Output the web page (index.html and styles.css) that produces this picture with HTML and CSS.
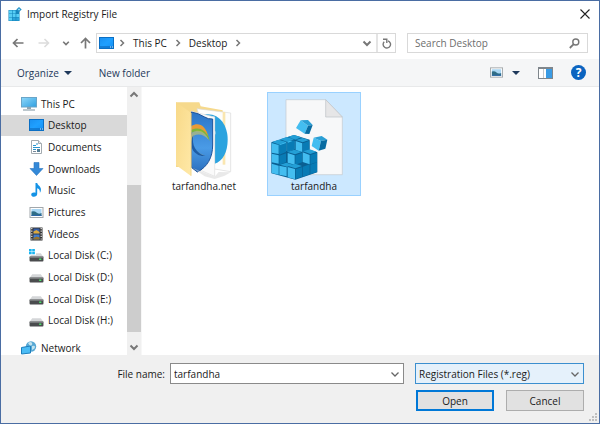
FILE: index.html
```html
<!DOCTYPE html>
<html lang="en">
<head>
  <meta charset="UTF-8" />
  <title>Import Registry File</title>
  <link rel="stylesheet" href="styles.css">
</head>
<body>
  <!-- Shared icons -->
  <svg class="sprite" aria-hidden="true">
    <defs>
      <linearGradient id="screenFill" x1="0" y1="0" x2="1" y2="1">
        <stop offset="0" stop-color="#1a8ff0" />
        <stop offset="0.5" stop-color="#1fa0ff" />
        <stop offset="1" stop-color="#1590f5" />
      </linearGradient>
      <linearGradient id="pcFill" x1="0" y1="0" x2="1" y2="1">
        <stop offset="0" stop-color="#8fd8fa" />
        <stop offset="1" stop-color="#2f9fe0" />
      </linearGradient>
      <linearGradient id="shieldFill" x1="0" y1="0" x2="0" y2="1">
        <stop offset="0" stop-color="#2b74c6" />
        <stop offset="0.6" stop-color="#4a9be6" />
        <stop offset="1" stop-color="#2a6fbe" />
      </linearGradient>
      <linearGradient id="flapFill" x1="0" y1="0" x2="1" y2="1">
        <stop offset="0" stop-color="#f8d988" />
        <stop offset="1" stop-color="#ffe9a8" />
      </linearGradient>
      <symbol id="desktopIcon" viewBox="0 0 15 12">
        <rect x="0.5" y="0.5" width="14" height="11" fill="url(#screenFill)" stroke="#0b6fc4" />
        <path d="M1 10h13" stroke="#0a5fae" />
        <path d="M11 10h1M13 10h1" stroke="#d8efff" />
      </symbol>
      <symbol id="chevronDown" viewBox="0 0 10 10">
        <path d="M1.5 3.5L5 7l3.5-3.5" fill="none" stroke="currentColor" stroke-width="1.3" />
      </symbol>
      <symbol id="chevronBold" viewBox="0 0 10 10">
        <path d="M1.500 3.500L5 7l3.500-3.500" fill="none" stroke="currentColor" stroke-width="2" />
      </symbol>
      <symbol id="chevronRight" viewBox="0 0 6 8">
        <path d="M1.500 1L4.500 4l-3 3" fill="none" stroke="currentColor" stroke-width="1.500" />
      </symbol>
      <symbol id="drive" viewBox="0 0 14 12">
        <path d="M3 4h8l2.500 3.500h-13z" fill="#d4d6d8" />
        <rect x="0.5" y="7" width="13" height="4.500" rx="0.8" fill="#4a4c4e" />
        <rect x="0.5" y="7" width="13" height="1" fill="#8d9092" />
        <rect x="9.5" y="8.8" width="2" height="1.400" fill="#4be36a" />
      </symbol>
      <symbol id="picture" viewBox="0 0 14 11">
        <rect x="0.5" y="0.5" width="13" height="10" fill="#fff" stroke="#a2a7ab" />
        <rect x="2" y="2" width="10" height="7" fill="#a9d6f3" />
        <path d="M2 4.500q3-1 5 1t5 .5v3H2z" fill="#2f6d86" />
        <path d="M2 8h10v1H2z" fill="#2d66a8" />
      </symbol>
    </defs>
  </svg>

  <div class="dialog">
    <header class="titleBar">
      <svg class="appIcon" viewBox="0 0 14 15">
        <rect x="0.5" y="3" width="11" height="11" fill="#1686bd" />
        <path d="M1 3.500h3v3H1zM1 7h3v3H1zM1 10.500h3v3H1zM4.600 3.500h3v3h-3zM4.600 7h3v3h-3zM8.300 7h3v3h-3z" fill="#56cdf5" />
        <path d="M4.600 10.500h3v3h-3zM8.300 10.500h3v3h-3z" fill="#2ba3da" />
        <path d="M11 0l2.700 2.500L11 5 8.300 2.500z" fill="#2391c8" />
        <path d="M11 1.400l1.200 1.100L11 3.600 9.800 2.500z" fill="#a6e5fb" />
      </svg>
      <h1 class="title">Import Registry File</h1>
      <button class="iconButton closeButton" aria-label="Close">
        <svg width="10" height="10" viewBox="0 0 10 10"><path d="M0.5 0.5l9 9M9.500 0.5l-9 9" stroke="#222" stroke-width="1.100" /></svg>
      </button>
    </header>

    <!-- Navigation and address -->
    <div class="addressRow">
      <div class="history">
        <button class="iconButton" aria-label="Back"><svg width="12" height="10" viewBox="0 0 12 10"><path d="M11.500 5H1.500M5.500 1l-4 4 4 4" fill="none" stroke="#777" stroke-width="1.700" /></svg></button>
        <button class="iconButton" aria-label="Forward" disabled><svg width="12" height="10" viewBox="0 0 12 10"><path d="M0.5 5h10M6.500 1l4 4-4 4" fill="none" stroke="#dcdcdc" stroke-width="1.600" /></svg></button>
        <button class="iconButton recent" aria-label="Recent locations"><svg width="8" height="8"><use href="#chevronBold" /></svg></button>
        <button class="iconButton" aria-label="Up"><svg width="11" height="12" viewBox="0 0 11 12"><path d="M5.500 11.500v-10M1 6l4.500-4.500L10 6" fill="none" stroke="#777" stroke-width="1.700" /></svg></button>
      </div>
      <div class="addressBox">
        <svg class="addressIcon" width="15" height="12"><use href="#desktopIcon" /></svg>
        <svg class="crumbArrow"><use href="#chevronRight" /></svg>
        <a class="crumb" href="#">This PC</a>
        <svg class="crumbArrow"><use href="#chevronRight" /></svg>
        <a class="crumb" href="#">Desktop</a>
        <svg class="crumbArrow"><use href="#chevronRight" /></svg>
        <button class="iconButton addressDrop" aria-label="Previous locations"><svg width="10" height="10"><use href="#chevronBold" /></svg></button>
        <button class="iconButton refresh" aria-label="Refresh">
          <svg width="10" height="11" viewBox="0 0 10 11"><path d="M6 2.800A3.700 3.700 0 1 1 2.200 3.700" fill="none" stroke="#777" stroke-width="1.400" /><path d="M1 1.300h3.800v3.800" fill="none" stroke="#777" stroke-width="1.400" /></svg>
        </button>
      </div>
      <div class="searchBox">
        <input type="text" class="searchInput" placeholder="Search Desktop" aria-label="Search Desktop" />
        <svg width="11" height="11" viewBox="0 0 11 11"><circle cx="6.800" cy="4" r="3" fill="none" stroke="#777" stroke-width="1.400" /><path d="M4.700 6.200L0.8 10" stroke="#777" stroke-width="1.800" /></svg>
      </div>
    </div>

    <div class="toolbar">
      <button class="toolButton">Organize <span class="triangle"></span></button>
      <button class="toolButton">New folder</button>
      <div class="viewTools">
        <button class="iconButton viewButton" aria-label="Change your view">
          <svg width="13" height="11"><use href="#picture" /></svg>
          <span class="triangle"></span>
        </button>
        <button class="iconButton" aria-label="Show the preview pane">
          <svg width="15" height="12" viewBox="0 0 15 12"><rect x="0.5" y="0.5" width="14" height="11" fill="#fff" stroke="#7f868c" /><path d="M0 1h15" stroke="#7f868c" stroke-width="2" /><path d="M5.500 2v9" stroke="#c5c9cc" /><rect x="8" y="2" width="6" height="9" fill="#3a9be4" /></svg>
        </button>
        <button class="iconButton helpButton" aria-label="Get help">?</button>
      </div>
    </div>

    <main class="content">
      <nav class="sidebar">
        <div class="places">
          <a class="place root" href="#">
            <svg width="16" height="14" viewBox="0 0 16 14"><rect x="0.5" y="0.5" width="15" height="9.500" fill="url(#pcFill)" stroke="#6aa5c8" /><path d="M6 10h4v2H6z" fill="#8ca4b2" /><path d="M2 13h12" stroke="#9aaab4" stroke-width="1.300" /></svg>
            This PC
          </a>
          <a class="place selected" href="#"><svg width="15" height="12"><use href="#desktopIcon" /></svg>Desktop</a>
          <a class="place" href="#">
            <svg width="15" height="14" viewBox="0 0 15 14"><path d="M2.500 0.5h7l3 3v10h-10z" fill="#fff" stroke="#a3abb0" /><path d="M9.500 0.5v3h3" fill="#e4e8ea" stroke="#a3abb0" /><path d="M4 5.500h3M7 4h2M4 7.500h7M4 9.500h3" stroke="#2795cf" stroke-width="1.200" /><path d="M4 11.500h3" stroke="#789" /><rect x="8" y="9" width="3" height="3" fill="#547e96" /></svg>
            Documents
          </a>
          <a class="place" href="#">
            <svg width="15" height="14" viewBox="0 0 15 14"><path d="M5 0.5h5v6h4L7.500 13.500 1 6.500h4z" fill="#3489d8" stroke="#2a76c0" stroke-width="0.6" /></svg>
            Downloads
          </a>
          <a class="place" href="#">
            <svg width="15" height="14" viewBox="0 0 15 14"><path d="M6.500 0h1.700c.3 2.500 4.600 3.300 3.600 7.800-.1.900-.5 1.500-1 2 .4-2.700-.6-3.800-2.600-4.500V11c0 3.500-6 3.500-6 .7 0-2 2.300-2.700 4.300-1.900z" fill="#1593e6" /></svg>
            Music
          </a>
          <a class="place" href="#"><svg width="15" height="11"><use href="#picture" /></svg>Pictures</a>
          <a class="place" href="#">
            <svg width="15" height="14" viewBox="0 0 15 14"><rect x="1.500" y="0.5" width="12" height="13" fill="#343434" /><path d="M2.800 1v12M12.200 1v12" stroke="#eee" stroke-width="1.200" stroke-dasharray="1.200 1.400" /><rect x="4.500" y="1.500" width="6" height="5" fill="#345ea8" /><path d="M4.500 4.500l3-1.500 3 2v1.500h-6z" fill="#dca93d" /><rect x="4.500" y="7.500" width="6" height="5" fill="#3d7bd0" /><path d="M4.500 11l3-1.500 3 1v2h-6z" fill="#96732c" /></svg>
            Videos
          </a>
          <a class="place" href="#">
            <svg width="15" height="13" viewBox="0 0 14 12"><use href="#drive" width="14" height="12" /><path d="M-0.500 0h7v5.500h-7z" fill="#fff" /><path d="M0 0h2.500v2.200H0zM3 0h2.500v2.200H3zM0 2.700h2.500v2.200H0zM3 2.700h2.500v2.200H3z" fill="#19b4f0" /></svg>
            Local Disk (C:)
          </a>
          <a class="place" href="#"><svg width="15" height="13"><use href="#drive" /></svg>Local Disk (D:)</a>
          <a class="place" href="#"><svg width="15" height="13"><use href="#drive" /></svg>Local Disk (E:)</a>
          <a class="place" href="#"><svg width="15" height="13"><use href="#drive" /></svg>Local Disk (H:)</a>
          <a class="place root network" href="#">
            <svg width="16" height="14" viewBox="0 0 16 14"><circle cx="10" cy="5.500" r="5.200" fill="#58a8d4" /><path d="M7 2q3-2 4 0t-2 3zM11 5q3-1 3 1t-3 3z" fill="#c2e3ef" /><path d="M0.5 6.500l9-1.500v7l-9 1z" fill="#4bbcf5" stroke="#1d7fbd" /></svg>
            Network
          </a>
        </div>
        <div class="scrollbar">
          <button class="iconButton scrollArrow up" aria-label="Scroll up"><svg width="10" height="10"><use href="#chevronBold" /></svg></button>
          <div class="track"><div class="thumb"></div></div>
          <button class="iconButton scrollArrow" aria-label="Scroll down"><svg width="10" height="10"><use href="#chevronBold" /></svg></button>
        </div>
      </nav>

      <div class="files">
        <div class="file">
          <svg class="fileIcon" viewBox="-24 -12 240 252">
            <path d="M12 13h70l4 12 66 12v170H12z" fill="#f6d98c" />
            <path d="M75 32l101 13v176l-48-8z" fill="#fdfdfd" stroke="#d9d9d9" stroke-width="2" />
            <path d="M152 42h8v158h-8z" fill="#fae6b0" />
            <path d="M96 50C140 42 167 80 167 125c0 36-14 64-39 72H96z" fill="#2ba3df" />
            <path d="M128 56v160l-8-10V56z" fill="#fff" />
            <path d="M118 104q14-12 12 2l-4 22z" fill="#fff" />
            <path d="M58 40l70 17v178l-70-30z" fill="#fafafa" stroke="#dcdcdc" stroke-width="2" />
            <path d="M58 42q20 3 40 15 10 7 24 6v78c0 38-16 66-46 81l-18-14z" fill="url(#shieldFill)" stroke="#1c5299" stroke-width="3" />
            <path d="M58 88c26-16 47 0 55 41-12-24-28-37-55-25z" fill="#7cb53c" />
            <path d="M58 84c24-14 44 2 50 30-12-19-26-28-50-18z" fill="#e99b35" />
            <path d="M60 104c20-12 38-6 50 21-14-15-30-20-45-12-8 26 3 50 34 60-34 3-50-34-39-69z" fill="#f3d64a" opacity="0.5" />
            <path d="M64 112c-6 30 8 54 36 62-34 4-54-32-36-62z" fill="#1c5ca8" />
            <path d="M62 210l66 26 12-14 36 1-18 10-30 10-30-8z" fill="#d4d4d4" opacity="0.5" />
            <path d="M12 13l46 32v190l-46-34z" fill="url(#flapFill)" />
            <path d="M57 45v188" stroke="#edcf80" stroke-width="2" />
          </svg>
          <span class="fileName">tarfandha.net</span>
        </div>
        <div class="file selected">
          <svg class="fileIcon" viewBox="18 -63 240 252">
            <path d="M54-46h119l50 52v173H54z" fill="#f7f8f9" stroke="#c3c9ce" stroke-width="2" />
            <path d="M173-46V6h50z" fill="#e6e6e7" stroke="#bdc1c5" stroke-width="2" />
            <path d="M10 82l68-22 47 14v30l23 8v60l-66 22-72-19z" fill="#0a5f92" />
            <!-- light faces -->
            <path d="M11 84l21 6v27l-21-4zM11 116l21 5v25l-21-4zM11 146l21 6v27l-21-5zM35 78l20 4v26l-20 6zM59 76l20 2v24l-20 8zM83 78l20 7v26l-20-6zM59 114l21 7v28l-21-6zM104 112l21 8v28l-21-7zM34 152l22 5v27l-22-5zM59 156l22 6v31l-22-6z" fill="#43bdf0" />
            <!-- shaded faces -->
            <path d="M34 91l20-7v27l-20 8zM34 122l20-7v27l-20 7zM58 84l21-8v27l-21 8zM104 85l20-8v26l-20 7zM82 121l20-7v28l-20 7zM127 120l20-7v28l-20 7zM83 163l20-7v29l-20 7zM105 155l20-7v30l-20 7zM127 149l20-7v29l-20 7z" fill="#087bb5" />
            <!-- top faces -->
            <path d="M12 81l21-7 21 7-20 8zM36 73l20-7 22 7-20 8zM60 65l18-5 22 7-18 7zM84 75l19-6 20 6-19 7zM59 111l20-7 22 7-20 7zM105 109l20-6 21 7-19 7zM36 149l19-6 20 6-18 6zM60 153l21-7 21 7-20 7z" fill="#239fd6" />
            <path d="M98 16l22 16-10 24-26-17z" fill="#43bdf0" />
            <path d="M98 16l22-1 14 15-14 2z" fill="#2a9fd5" />
            <path d="M120 32l14-2-10 27-14-1z" fill="#086ca2" />
            <path d="M137 68l22 10-7 29-21-14z" fill="#43bdf0" />
            <path d="M137 68l24-5 17 11-19 4z" fill="#2a9fd5" />
            <path d="M159 78l19-4-6 27-20 6z" fill="#086ca2" />
          </svg>
          <span class="fileName">tarfandha</span>
        </div>
      </div>
    </main>

    <footer class="footer">
      <div class="nameRow">
        <label class="nameLabel" for="fileName">File name:</label>
        <div class="combo nameCombo">
          <input type="text" id="fileName" value="tarfandha" />
          <svg class="comboArrow"><use href="#chevronDown" /></svg>
        </div>
        <div class="combo typeCombo">
          <select id="fileType" aria-label="File type">
            <option>Registration Files (*.reg)</option>
          </select>
          <svg class="comboArrow"><use href="#chevronDown" /></svg>
        </div>
      </div>
      <div class="actions">
        <button class="dialogButton primary">Open</button>
        <button class="dialogButton">Cancel</button>
      </div>
      <svg class="grip" viewBox="0 0 8 8"><path d="M6 0h2v2H6zM3 3h2v2H3zM6 3h2v2H6zM0 6h2v2H0zM3 6h2v2H3zM6 6h2v2H6z" fill="#bfbfbf" /></svg>
    </footer>
  </div>
</body>
</html>
```
FILE: styles.css
```css
* {
  box-sizing: border-box;
}

body {
  margin: 0;
  font-family: "Open Sans", "Noto Sans", sans-serif;
  font-size: 10px;
  line-height: 16px;
  color: #1a1a1a;
}

h1 {
  margin: 0;
  font-size: 10px;
  font-weight: normal;
}

a {
  color: inherit;
  text-decoration: none;
}

button,
input,
select {
  font: inherit;
  color: inherit;
}

svg {
  flex: none;
  display: block;
}

.sprite {
  position: absolute;
  width: 0;
  height: 0;
}

.dialog {
  display: flex;
  flex-direction: column;
  min-height: 100vh;
  border: 1px solid #4a6da3;
  background-color: #fff;
}

.iconButton {
  display: flex;
  align-items: center;
  justify-content: center;
  padding: 0;
  border: none;
  background: none;
  color: #777;
}

/* Title bar */
.titleBar {
  display: flex;
  align-items: center;
  height: 26px;
  padding: 0 9px 0 7px;
}

.appIcon {
  width: 14px;
  height: 15px;
}

.title {
  flex: 1;
  margin-left: 5px;
}

/* Address row */
.addressRow {
  display: flex;
  align-items: center;
  height: 32px;
  padding: 0 11px;
}

.history {
  display: flex;
  align-items: center;
  gap: 14px;
  width: 84px;
}

.recent {
  margin: 0 -4px 0 -2px;
}

.addressBox {
  display: flex;
  align-items: center;
  flex: 1;
  height: 20px;
  border: 1px solid #d9d9d9;
}

.addressIcon {
  margin: 0 5px 0 2px;
}

.crumbArrow {
  width: 6px;
  height: 8px;
  color: #777;
}

.crumb {
  margin: 0 8px;
}

.addressDrop {
  width: 18px;
  margin-left: auto;
}

.refresh {
  width: 19px;
  height: 18px;
  border-left: 2px solid #e4e4e4;
}

.searchBox {
  display: flex;
  align-items: center;
  width: 181px;
  height: 20px;
  margin-left: 11px;
  padding: 0 7px;
  border: 1px solid #d9d9d9;
}

.searchInput {
  flex: 1;
  min-width: 0;
  padding: 0;
  border: none;
  outline: none;
}

.searchInput::placeholder {
  color: #6d6d6d;
}

/* Toolbar */
.toolbar {
  display: flex;
  align-items: center;
  gap: 27px;
  height: 28px;
  padding: 0 13px 0 16px;
  background-color: #f5f6f7;
  border-bottom: 1px solid #e8e9ea;
  color: #1e395b;
}

.toolButton {
  display: flex;
  align-items: center;
  gap: 5px;
  padding: 0;
  border: none;
  background: none;
}

.triangle {
  border: 4px solid transparent;
  border-top-color: #1e395b;
  border-bottom-width: 0;
}

.viewTools {
  display: flex;
  align-items: center;
  gap: 18px;
  margin-left: auto;
}

.viewButton {
  gap: 9px;
}

.helpButton {
  width: 15px;
  height: 15px;
  border-radius: 50%;
  background-color: #0b64c0;
  color: #fff;
  font-size: 12px;
  font-weight: bold;
}

/* Main area */
.content {
  display: flex;
  flex: 1;
}

.sidebar {
  display: flex;
  width: 141px;
  border-right: 1px solid #f7f7f7;
}

.places {
  display: flex;
  flex-direction: column;
  flex: 1;
  padding-top: 6px;
}

.place {
  display: flex;
  align-items: center;
  flex: 1;
  gap: 4px;
  padding-left: 28px;
}

.place.root {
  padding-left: 20px;
}

.place.selected {
  background-color: #d9d9d9;
}

.place.network {
  flex: none;
  height: 24px;
  padding-top: 10px;
}

.scrollbar {
  display: flex;
  flex-direction: column;
  width: 14px;
  background-color: #f0f0f0;
}

.scrollArrow {
  height: 16px;
}

.scrollArrow.up svg {
  transform: rotate(180deg);
}

.track {
  display: flex;
  flex-direction: column;
  justify-content: flex-end;
  flex: 1;
  padding-bottom: 7px;
}

.thumb {
  height: 64%;
  background-color: #cdcdcd;
}

.files {
  display: flex;
  align-items: flex-start;
  gap: 16px;
  flex: 1;
  padding: 5px 15px;
}

.file {
  display: flex;
  flex-direction: column;
  align-items: center;
  width: 94px;
  height: 104px;
  padding-top: 1px;
  border: 1px solid transparent;
}

.file.selected {
  background-color: #cce8ff;
  border-color: #99d1ff;
}

.fileIcon {
  width: 80px;
  height: 84px;
  overflow: visible;
}

/* Footer */
.footer {
  position: relative;
  padding: 8px 15px 12px;
  background-color: #f0f0f0;
}

.nameRow {
  display: flex;
  align-items: center;
}

.nameLabel {
  width: 154px;
  padding-right: 5px;
  text-align: right;
}

.combo {
  display: flex;
  align-items: center;
  height: 21px;
  border: 1px solid #8a8a8a;
  background-color: #fff;
}

.nameCombo {
  flex: 1;
}

.typeCombo {
  width: 169px;
  margin-left: 11px;
  border-color: #3c8fcf;
  background-color: #e5f1fb;
}

.combo input,
.combo select {
  flex: 1;
  min-width: 0;
  height: 19px;
  padding: 0 3px;
  border: none;
  outline: none;
  appearance: none;
  background: none;
}

.comboArrow {
  width: 10px;
  height: 10px;
  margin-right: 3px;
  color: #666;
  pointer-events: none;
}

.actions {
  display: flex;
  justify-content: flex-end;
  gap: 12px;
  margin-top: 6px;
}

.dialogButton {
  width: 78px;
  height: 21px;
  padding: 0;
  border: 1px solid #adadad;
  background-color: #e1e1e1;
}

.dialogButton.primary {
  border: 2px solid #0078d7;
}

.grip {
  position: absolute;
  right: 2px;
  bottom: 2px;
  width: 8px;
  height: 8px;
}
```
